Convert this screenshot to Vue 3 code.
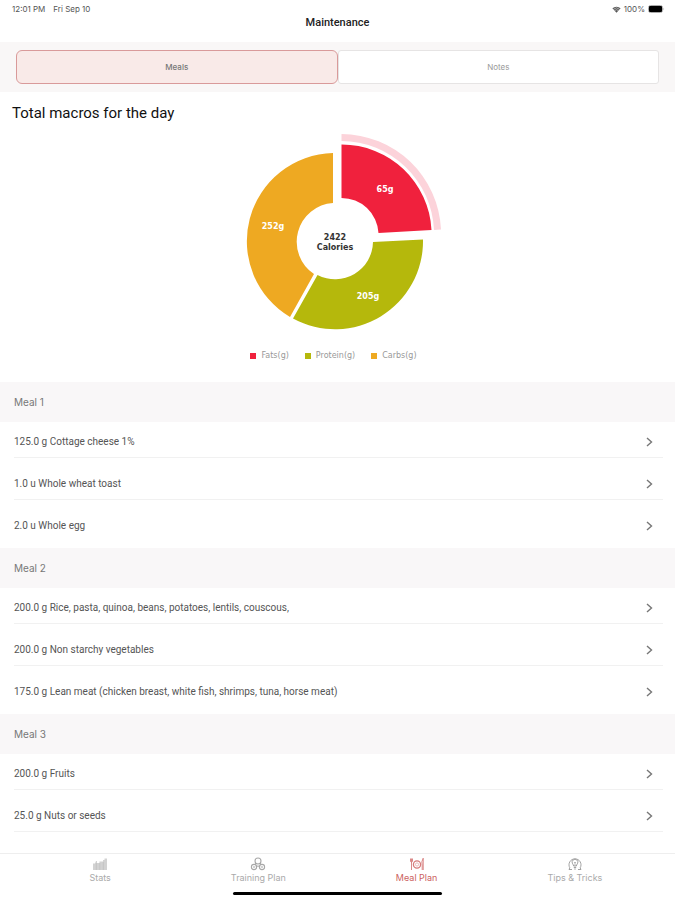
<template>
  <div class="app">
    <header class="header">
      <div class="status">
        <div class="status-group">
          <span>12:01 PM</span>
          <span>Fri Sep 10</span>
        </div>
        <div class="status-right">
          <svg width="9" height="7" viewBox="0 0 9 7" aria-hidden="true">
            <path d="M0.4 2.3 A6 6 0 0 1 8.6 2.3 L4.5 6.8 Z" fill="#555" />
            <path d="M1.4 3.3 A4.5 4.5 0 0 1 7.6 3.3 M2.6 4.6 A2.8 2.8 0 0 1 6.4 4.6" fill="none" stroke="#fff" stroke-width="0.5" />
          </svg>
          <span>100%</span>
          <svg width="17" height="8" viewBox="0 0 17 8" aria-hidden="true">
            <rect x="0.5" y="0.5" width="14" height="7" rx="2" fill="#fff" stroke="#aaa" />
            <rect x="1" y="1" width="13" height="6" rx="1" fill="#000" />
            <path d="M15.5 2.5 Q16.8 4 15.5 5.5 Z" fill="#999" />
          </svg>
        </div>
      </div>
      <h1 class="title">Maintenance</h1>
    </header>

    <div class="segments">
      <button
        v-for="view in views"
        :key="view"
        type="button"
        class="segment"
        :class="{ active: view === activeView }"
        @click="activeView = view"
      >
        {{ view }}
      </button>
    </div>

    <main class="content">
      <section class="macros">
        <h2>Total macros for the day</h2>
        <svg class="chart" width="220" height="210" viewBox="0 0 220 210" role="img">
          <path d="M106.5 9 A100 100 0 0 1 206 104.5 L199 105 A93 93 0 0 0 106.5 16 Z" fill="#fcd3da" />
          <path d="M106.5 19.5 A90 90 0 0 1 196.5 105 L143.5 108 A37 37 0 0 0 106.5 73 Z" fill="#f0213d" />
          <path d="M188 114.5 A88 88 0 0 1 58 193.5 L82.5 150 A38 38 0 0 0 138 117 Z" fill="#b5b80c" />
          <path d="M98 28 A88.2 88.2 0 0 0 55 192 L79 149 A38.8 38.8 0 0 1 98 78 Z" fill="#eea922" />
          <g class="chart-label">
            <text x="150" y="67">65g</text>
            <text x="133" y="174">205g</text>
            <text x="38" y="104">252g</text>
          </g>
          <g class="chart-total">
            <text x="100" y="115">2422</text>
            <text x="100" y="125">Calories</text>
          </g>
        </svg>
        <ul class="legend">
          <li v-for="macro in macros" :key="macro.name">
            <span class="dot" :class="macro.color"></span>{{ macro.name }}
          </li>
        </ul>
      </section>

      <section v-for="meal in meals" :key="meal.name" class="meal">
        <h3>{{ meal.name }}</h3>
        <ul>
          <li v-for="item in meal.items" :key="item">
            <a href="#" class="item" @click.prevent>
              <span>{{ item }}</span>
              <svg width="7" height="10" viewBox="0 0 7 10" aria-hidden="true">
                <path d="M1 1 L5.5 5 L1 9" fill="none" stroke="#777" stroke-width="1.4" />
              </svg>
            </a>
          </li>
        </ul>
      </section>
    </main>

    <nav class="tabbar">
      <a href="#" class="tab" @click.prevent>
        <svg width="16" height="14" viewBox="0 0 16 14" aria-hidden="true">
          <path d="M1 13 V6.5 H3 L4 4 H5 V6 H7.4 V4.5 H11 V3 H12.5 V1.5 H15 V13 Z" fill="#d2d2d2" />
          <path d="M4.3 13 V6 M7.8 13 V6 M11.3 13 V5" fill="none" stroke="#bbb" stroke-width="0.6" />
        </svg>
        Stats
      </a>
      <a href="#" class="tab" @click.prevent>
        <svg width="16" height="14" viewBox="0 0 16 14" fill="none" stroke="#a8a8a8" stroke-width="1.1" aria-hidden="true">
          <circle cx="8" cy="4" r="3" />
          <path d="M5.8 6 L4.8 8 M10.2 6 L11.2 8 M6 10 Q8 8 10 10" />
          <circle cx="4" cy="10" r="2.6" />
          <circle cx="12" cy="10" r="2.6" />
          <path d="M3 10 H5 M11 10 H13" />
        </svg>
        Training Plan
      </a>
      <a href="#" class="tab active" @click.prevent>
        <svg width="16" height="14" viewBox="0 0 16 14" fill="none" stroke="#d67c7c" aria-hidden="true">
          <circle cx="8" cy="7.5" r="3.6" stroke-width="1.3" />
          <circle cx="8" cy="7.5" r="1.6" stroke-width="0.5" />
          <path d="M1.5 1.5 V4.5 Q2.5 6 3.5 4.5 V1.5 M2.5 1.5 V13" stroke-width="0.9" />
          <path d="M13.2 13 V8 Q12 5 14.2 1.2 V13" stroke-width="0.9" />
        </svg>
        Meal Plan
      </a>
      <a href="#" class="tab" @click.prevent>
        <svg width="16" height="14" viewBox="0 0 16 14" fill="none" stroke="#999" stroke-width="0.9" aria-hidden="true">
          <path d="M5 12.5 H2 L2.8 10.8 A6 6 0 1 1 13.2 10.8 L14 12.5 H11" />
          <path d="M6.6 9 Q6.6 8 5.6 6.8 A2.9 2.9 0 1 1 10.4 6.8 Q9.4 8 9.4 9 Z M6.8 10.5 H9.2 M7.2 12 H8.8" />
          <path d="M7 5 L8 6 L9 5 M8 6 V9" stroke-width="0.7" />
        </svg>
        Tips &amp; Tricks
      </a>
    </nav>
    <div class="home-indicator"></div>
  </div>
</template>

<script setup>
import { ref } from 'vue'

const views = ['Meals', 'Notes']
const activeView = ref('Meals')

const macros = [
  { name: 'Fats(g)', color: 'red' },
  { name: 'Protein(g)', color: 'green' },
  { name: 'Carbs(g)', color: 'orange' }
]

const meals = [
  {
    name: 'Meal 1',
    items: ['125.0 g Cottage cheese 1%', '1.0 u Whole wheat toast', '2.0 u Whole egg']
  },
  {
    name: 'Meal 2',
    items: [
      '200.0 g Rice, pasta, quinoa, beans, potatoes, lentils, couscous,',
      '200.0 g Non starchy vegetables',
      '175.0 g Lean meat (chicken breast, white fish, shrimps, tuna, horse meat)'
    ]
  },
  {
    name: 'Meal 3',
    items: ['200.0 g Fruits', '25.0 g Nuts or seeds']
  }
]
</script>

<style>
body {
  margin: 0;
  background: #fff;
}
</style>

<style scoped>
.app {
  min-height: 100vh;
  display: flex;
  flex-direction: column;
  font-family: Inter, "Liberation Sans", sans-serif;
  color: #555;
}

h1,
h2,
h3,
ul {
  margin: 0;
  padding: 0;
  font-weight: 400;
  list-style: none;
}

a {
  color: inherit;
  text-decoration: none;
}

.header {
  padding-bottom: 11px;
}

.status {
  display: flex;
  justify-content: space-between;
  padding: 3px 10px 0 12px;
  font-size: 8px;
  line-height: 12px;
}

.status-group {
  display: flex;
  gap: 8px;
}

.status-right {
  display: flex;
  align-items: center;
  gap: 3px;
}

.title,
h2,
.item {
  font-family: Roboto, "Liberation Sans", sans-serif;
}

.title {
  font-size: 11px;
  line-height: 16px;
  font-weight: 500;
  color: #222;
  text-align: center;
}

.segments {
  display: flex;
  padding: 8px 16px;
  background: #f9f7f7;
}

.segment {
  flex: 1;
  height: 34px;
  padding: 0;
  border: 1px solid #e6e4e4;
  border-radius: 3px;
  background: #fff;
  font-family: inherit;
  font-size: 8px;
  color: #999;
  cursor: pointer;
}

.segment.active {
  border-color: #d99a9a;
  border-radius: 6px;
  background: #f9eae8;
  font-weight: 500;
  color: #777;
}

.content {
  flex: 1;
}

.macros {
  display: flex;
  flex-direction: column;
  align-items: center;
  padding-bottom: 20px;
}

h2 {
  align-self: stretch;
  padding: 11px 12px 2px;
  font-size: 15px;
  line-height: 20px;
  color: #111;
}

.chart {
  margin-left: 15px;
}

.chart text {
  font-family: "DejaVu Sans", sans-serif;
  font-size: 8px;
  font-weight: 700;
  text-anchor: middle;
}

.chart-label {
  fill: #fff;
}

.chart-total {
  fill: #333;
}

.legend {
  display: flex;
  gap: 16px;
  padding: 15px 8px 0 0;
  font-family: "DejaVu Sans", sans-serif;
  font-size: 8px;
  line-height: 12px;
  color: #999;
}

.legend li {
  display: flex;
  align-items: center;
  gap: 5px;
}

.dot {
  width: 6px;
  height: 6px;
}

.red {
  background: #f0213d;
}

.green {
  background: #b5b80c;
}

.orange {
  background: #eea922;
}

h3 {
  padding: 12px 14px;
  background: #f9f7f8;
  font-size: 10px;
  line-height: 16px;
  color: #777;
}

.meal li {
  margin: 0 12px 6px 14px;
  border-bottom: 1px solid #f1f1f1;
}

.meal li:nth-child(3) {
  border-color: transparent;
}

.item {
  display: flex;
  align-items: center;
  justify-content: space-between;
  padding: 12px 10px 7px 0;
  font-size: 10px;
  line-height: 16px;
}

.tabbar {
  display: flex;
  padding: 3px 21px 0;
  border-top: 1px solid #eee;
}

.tab {
  flex: 1;
  display: flex;
  flex-direction: column;
  align-items: center;
  font-size: 9px;
  line-height: 14px;
  color: #aaa;
}

.tab.active {
  color: #cc5f5f;
}

.home-indicator {
  width: 31%;
  height: 3px;
  margin: 7px auto 5px;
  border-radius: 2px;
  background: #000;
}
</style>
